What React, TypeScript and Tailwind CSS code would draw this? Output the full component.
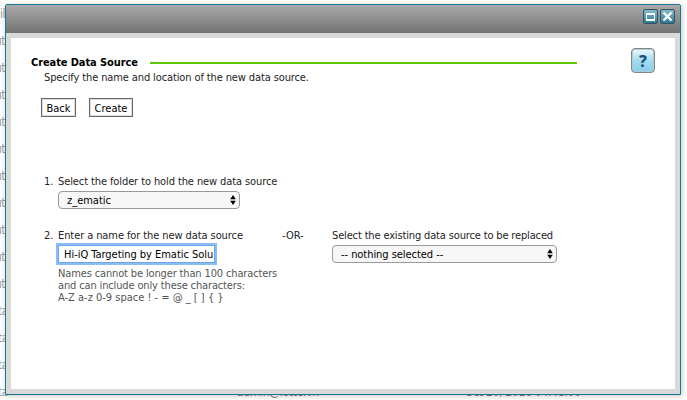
import type { ReactNode } from "react";

const backdropRows = ["il", "ut", "ut", "ut", "ut", "ut", "ut", "ut", "ut", "ut", "ut", "ta", "ta", "ta", "ta"];

function Stepper() {
  return (
    <svg width="6" height="10" viewBox="0 0 6 10" className="shrink-0" fill="#000">
      <path d="M3 0L5.8 4.2H.2zM3 10L.2 5.8h5.6z" />
    </svg>
  );
}

function Select({ className, children }: { className: string; children: ReactNode }) {
  return (
    <button className={`flex h-[18px] items-center justify-between rounded-[4px] border border-[#999] bg-[#f7f7f7] pr-[3px] pl-2 whitespace-nowrap text-black ${className}`}>
      <span className="relative top-px">{children}</span>
      <Stepper />
    </button>
  );
}

function TitleButton({ children }: { children: ReactNode }) {
  return (
    <button className="flex size-[15px] items-center justify-center rounded-[2px] border border-[#34535f] bg-linear-to-b from-[#83bacb] to-[#287c97]">
      {children}
    </button>
  );
}

export default function App() {
  return (
    <div className="relative h-[400px] w-[687px] overflow-hidden bg-[#fdfdfb] font-['DejaVu_Sans_Condensed','DejaVu_Sans',sans-serif] text-[11px] leading-[14px] text-[#222] [font-stretch:condensed]">
      <div className="flex w-[6px] flex-col items-start text-[12px] tracking-[-0.5px] text-[#a09ca0]">
        {backdropRows.map((label, i) => (
          <span key={i} className={`flex h-[27px] shrink-0 items-center whitespace-nowrap ${label === "ut" ? "-ml-[5px]" : label === "ta" ? "-ml-[2px]" : ""}`}>{label}</span>
        ))}
      </div>
      <div className="absolute top-[385px] left-[237px] flex whitespace-nowrap text-[12px] tracking-[-0.3px] text-[#777]">
        <span className="w-[228px]">admin@lotte.vn</span>
        <span>Oct 20, 2016 04:48:00</span>
      </div>

      <section className="absolute top-[4px] left-[5px] flex h-[391px] w-[676px] flex-col rounded-t-[2px] border border-[#167797] bg-[#d9d9d9] shadow-[1px_1px_5px_rgba(0,0,0,0.22)]">
        <header className="flex h-[28px] shrink-0 items-start justify-end gap-[2px] bg-linear-to-b from-[#aaa] to-[#737373] pt-1 pr-[5px]">
          <TitleButton>
            <svg width="11" height="11" viewBox="0 0 11 11" fill="#fff" fillRule="evenodd">
              <path d="M1 2h9v8H1zM2 4h7v4H2z" />
            </svg>
          </TitleButton>
          <TitleButton>
            <svg width="11" height="11" viewBox="0 0 11 11" fill="none" stroke="#fff" strokeWidth="2.3">
              <path d="M1.5 1.5l8 8M9.5 1.5l-8 8" />
            </svg>
          </TitleButton>
        </header>

        <main className="m-[5px] flex flex-1 flex-col bg-white pl-5">
          <div className="flex h-[47px] pt-[10px]">
            <div className="w-[600px] pt-[6px]">
              <div className="flex h-4 items-center">
                <h1 className="w-[119px] pt-[2px] font-bold tracking-[-0.1px] whitespace-nowrap text-black">Create Data Source</h1>
                <div className="mt-px h-[2px] w-[427px] bg-[#5bc500]" />
              </div>
              <p className="pt-px pl-[13px] tracking-[-0.115px] whitespace-nowrap">Specify the name and location of the new data source.</p>
            </div>
            <button className="flex h-[25px] w-6 items-center justify-center rounded-[4px] border-[1.5px] border-[#858585] bg-linear-to-b from-[#edfaff] from-0% via-[#a4dcef] via-50% to-[#86cee6] font-['Noto_Sans',sans-serif] text-[16px] font-extrabold text-[#15527c] shadow-[inset_0_0_0_1px_#aacbd7]">?</button>
          </div>

          <div className="mt-[13px] flex gap-[13px] pl-[10px] text-black">
            <button className="h-[19px] w-[35px] border border-[#666] bg-white pt-px leading-[17px] shadow-[inset_0_0_0_1px_#ddd]">Back</button>
            <button className="h-[19px] w-[44px] border border-[#666] bg-white pt-px leading-[17px] shadow-[inset_0_0_0_1px_#ddd]">Create</button>
          </div>

          <div className="mt-[58px] flex pl-[13px]">
            <span className="w-[14px]">1.</span>
            <div>
              <p className="mb-[2px] tracking-[-0.1px] whitespace-nowrap">Select the folder to hold the new data source</p>
              <Select className="w-[182px]">z_ematic</Select>
            </div>
          </div>

          <div className="mt-[20px] flex pl-[13px]">
            <span className="w-[14px]">2.</span>
            <div className="w-[224px]">
              <p className="mb-[2px] tracking-[-0.09px] whitespace-nowrap">Enter a name for the new data source</p>
              <div className="h-[18px] w-[157px] overflow-hidden border border-[#6aa6ee] bg-white pl-[5px] leading-[17px] tracking-[-0.03px] whitespace-nowrap text-black outline-2 outline-[#8dbcf7]">
                Hi-iQ Targeting by Ematic Solu
              </div>
              <p className="mt-[5px] leading-3 tracking-[-0.14px] whitespace-nowrap text-[#555]">
                Names cannot be longer than 100 characters<br />
                and can include only these characters:<br />
                <span className="tracking-normal">A-Z a-z 0-9 space ! - = @ _ [ ] {"{ }"}</span>
              </p>
            </div>
            <span className="w-[50px]">-OR-</span>
            <div>
              <p className="mb-[2px] tracking-[-0.15px] whitespace-nowrap">Select the existing data source to be replaced</p>
              <Select className="w-[225px]"><span className="tracking-[-0.05px]">-- nothing selected --</span></Select>
            </div>
          </div>
        </main>
      </section>
    </div>
  );
}
